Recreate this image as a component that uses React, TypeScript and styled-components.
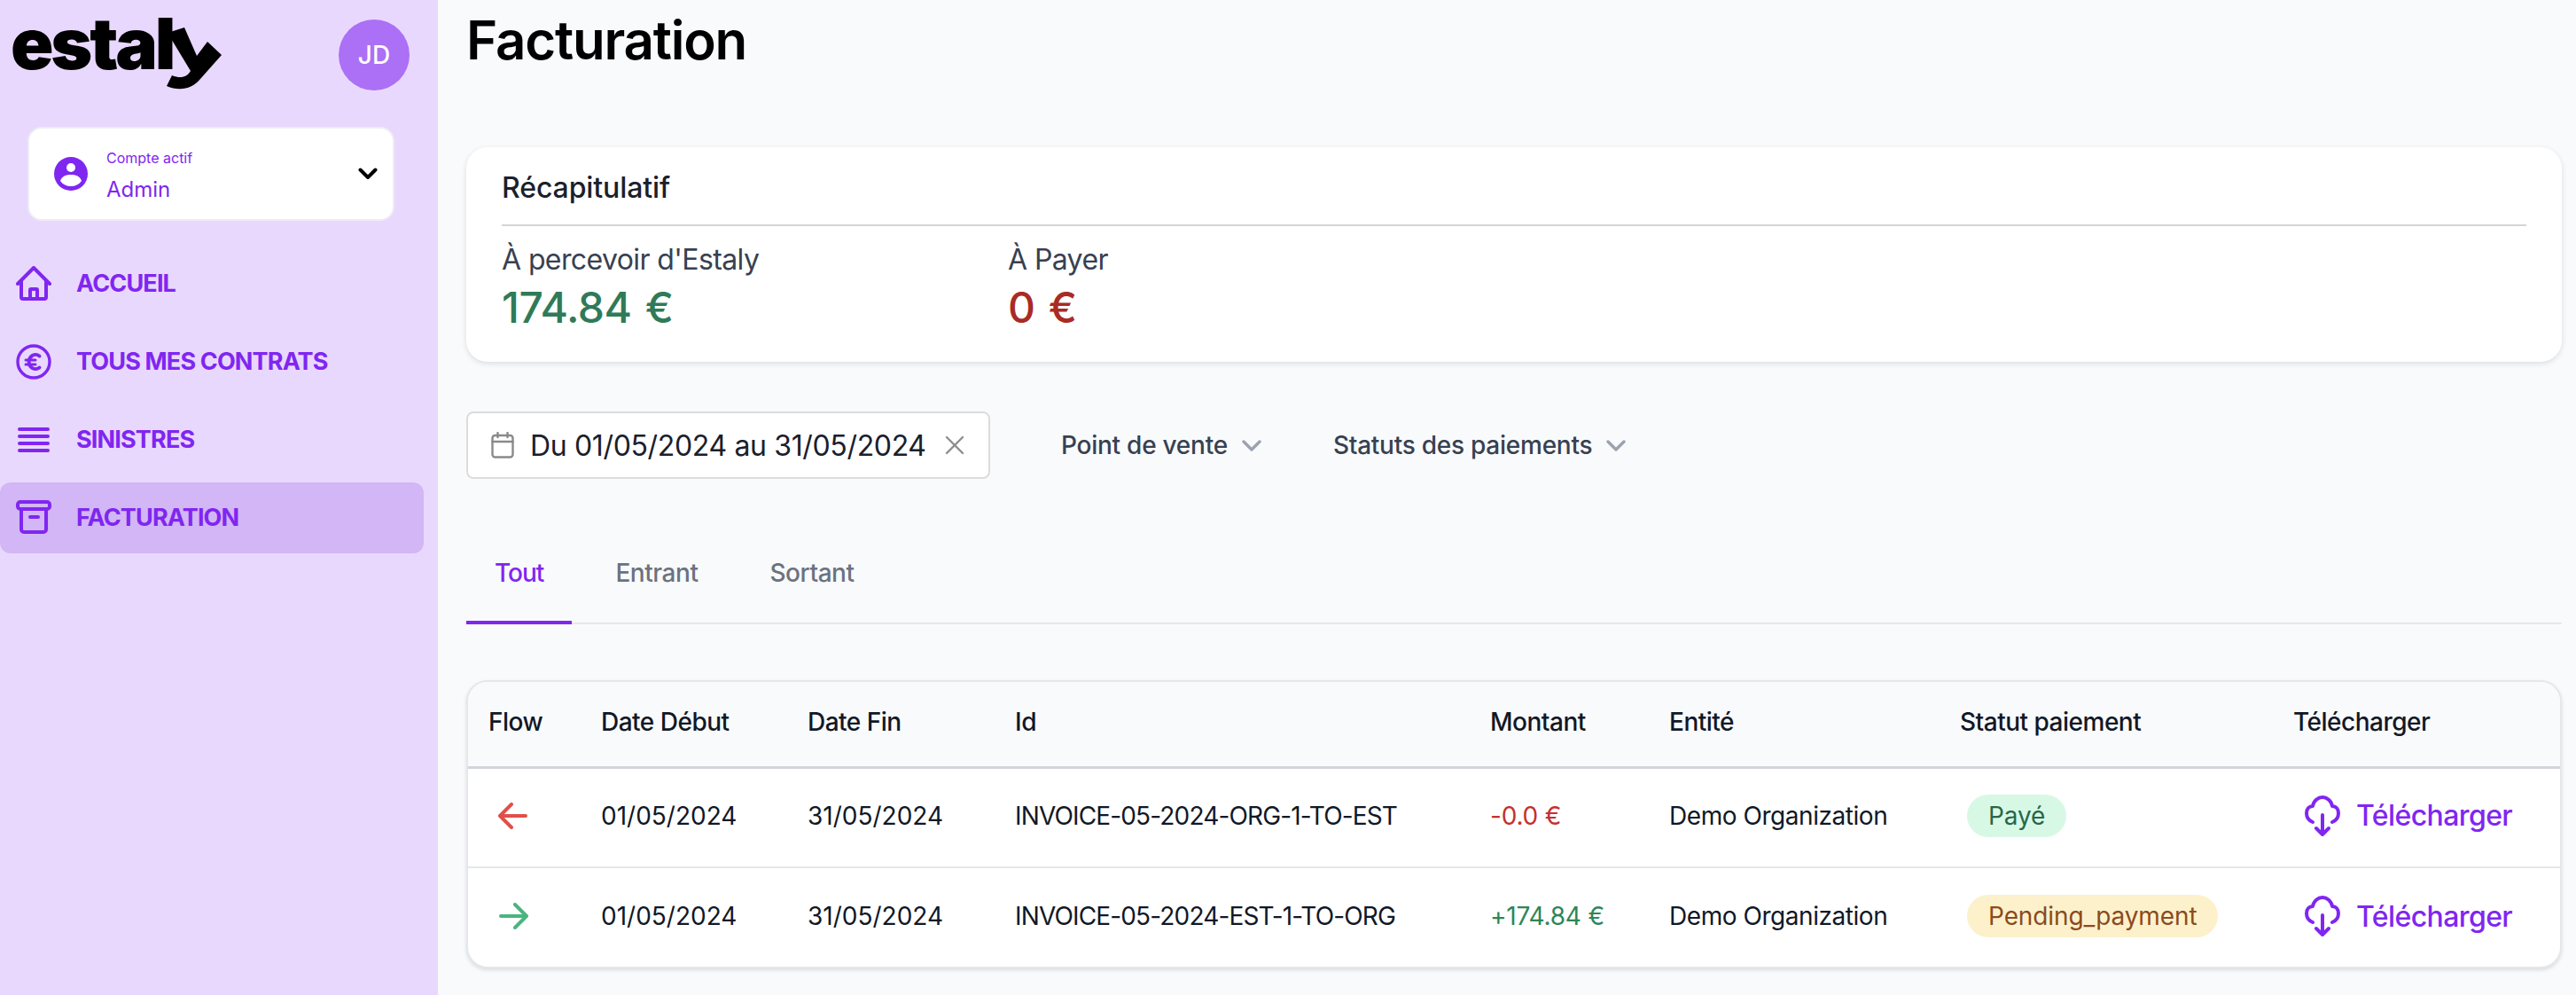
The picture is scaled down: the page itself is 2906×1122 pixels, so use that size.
import React from "react";
import styled, { createGlobalStyle } from "styled-components";

const purple = "#8026f1";

const GlobalStyle = createGlobalStyle`
  html, body {
    margin: 0;
    padding: 0;
    height: 100%;
    overflow: hidden;
    background: #f9fafb;
    font-family: "Inter", "Liberation Sans", sans-serif;
  }
  * {
    box-sizing: border-box;
  }
`;

const HomeIcon = () => (
  <svg width="40" height="40" viewBox="0 0 40 40" fill="none" stroke={purple} strokeWidth="4" strokeLinecap="round" strokeLinejoin="round">
    <path d="M2 20 L20 2 L38 20" />
    <path d="M6 17 V35 a2 2 0 0 0 2 2 H32 a2 2 0 0 0 2 -2 V17" />
    <path d="M16 37 V27 a1 1 0 0 1 1 -1 H23 a1 1 0 0 1 1 1 V37" />
  </svg>
);

const EuroIcon = () => (
  <svg width="40" height="40" viewBox="0 0 40 40" fill="none" stroke={purple} strokeLinecap="round">
    <circle cx="20" cy="20" r="18" strokeWidth="3.4" />
    <path d="M26.5 13.5 a7.5 8 0 1 0 0 13" strokeWidth="4" />
    <path d="M11 18 H22 M11 23 H22" strokeWidth="3" />
  </svg>
);

const LinesIcon = () => (
  <svg width="40" height="40" viewBox="0 0 40 40" fill="none" stroke={purple} strokeWidth="4" strokeLinecap="round">
    <path d="M4 5 H36 M4 13 H36 M4 21 H36 M4 29 H36" transform="translate(0 3)" />
  </svg>
);

const ArchiveIcon = () => (
  <svg width="40" height="40" viewBox="0 0 40 40" fill="none" stroke={purple} strokeWidth="4" strokeLinecap="round" strokeLinejoin="round">
    <rect x="2" y="2" width="36" height="8" rx="3" />
    <path d="M6 10 V33 a3 3 0 0 0 3 3 H31 a3 3 0 0 0 3 -3 V10" />
    <path d="M16 19 H25" />
  </svg>
);

const UserCircleIcon = () => (
  <svg width="38" height="38" viewBox="0 0 38 38">
    <circle cx="19" cy="19" r="19" fill={purple} />
    <circle cx="19" cy="12" r="5" fill="#fff" />
    <path d="M7 27 C9 21 14 20 19 20 C24 20 29 21 31 27 C28 31 24 33 19 33 C14 33 10 31 7 27 Z" fill="#fff" />
  </svg>
);

const CalendarIcon = () => (
  <svg width="26" height="30" viewBox="0 0 26 30" fill="none" stroke="#8a8a8a" strokeWidth="2.4" strokeLinecap="round">
    <rect x="1.5" y="4" width="23" height="24.5" rx="3" />
    <path d="M1.5 11 H24.5 M7.5 1 V6 M18.5 1 V6" />
  </svg>
);

const CloseIcon = () => (
  <svg width="22" height="22" viewBox="0 0 22 22" fill="none" stroke="#8f8f8f" strokeWidth="2.4" strokeLinecap="round">
    <path d="M2 2 L20 20 M20 2 L2 20" />
  </svg>
);

const SmallChevron = () => (
  <svg width="22" height="13" viewBox="0 0 22 13" fill="none" stroke="#9ca3af" strokeWidth="3.4" strokeLinecap="round" strokeLinejoin="round">
    <path d="M2 2 L11 11 L20 2" />
  </svg>
);

const BlackChevron = () => (
  <svg width="22" height="14" viewBox="0 0 22 14" fill="none" stroke="#000" strokeWidth="4" strokeLinecap="round" strokeLinejoin="round">
    <path d="M2.5 2.5 L11 11 L19.5 2.5" />
  </svg>
);

const ArrowIcon = ({ color, flip }: { color: string; flip?: boolean }) => (
  <svg width="34" height="30" viewBox="0 0 34 30" fill="none" stroke={color} strokeWidth="4" strokeLinecap="round" strokeLinejoin="round" style={flip ? { transform: "scaleX(-1)" } : undefined}>
    <path d="M2 15 H31 M15 2 L2 15 L15 28" />
  </svg>
);

const CloudDownloadIcon = () => (
  <svg width="40" height="46" viewBox="0 0 40 46" fill="none" stroke={purple} strokeWidth="4" strokeLinecap="round" strokeLinejoin="round">
    <path d="M9 30 C4 28 2 24 2 20 C2 15 5 12 9 12 C10 6 15 2 20 2 C25 2 30 6 31 12 C35 12 38 15 38 20 C38 24 36 28 31 30" />
    <path d="M20 22 V44 M13 37 L20 44 L27 37" />
  </svg>
);

const navItems = [
  { label: "ACCUEIL", icon: <HomeIcon /> },
  { label: "TOUS MES CONTRATS", icon: <EuroIcon /> },
  { label: "SINISTRES", icon: <LinesIcon /> },
  { label: "FACTURATION", icon: <ArchiveIcon />, active: true },
];

const invoices = [
  {
    out: true,
    id: "INVOICE-05-2024-ORG-1-TO-EST",
    amount: "-0.0 €",
    status: "Payé",
    paid: true,
  },
  {
    out: false,
    id: "INVOICE-05-2024-EST-1-TO-ORG",
    amount: "+174.84 €",
    status: "Pending_payment",
    paid: false,
  },
];

const columns = [127, 233, 234, 536, 202, 328, 376, 328];
const headers = ["Flow", "Date Début", "Date Fin", "Id", "Montant", "Entité", "Statut paiement", "Télécharger"];

const App = () => {
  return (
    <Page>
      <GlobalStyle />
      <Sidebar>
        <SidebarHead>
          <Logo aria-label="estaly">
            <LogoText>estal</LogoText>
            <LogoTail width="62" height="74" viewBox="0 0 62 74">
              <path d="M1 10 L20 4 L34 36 L46 20 L62 35 L38 62 C28 74 14 76 0 70 L6 58 C16 62 23 60 27 53 L1 10 Z" fill="#000" />
            </LogoTail>
          </Logo>
          <Avatar>JD</Avatar>
        </SidebarHead>
        <AccountCard>
          <UserCircleIcon />
          <AccountText>
            <AccountLabel>Compte actif</AccountLabel>
            <AccountName>Admin</AccountName>
          </AccountText>
          <BlackChevron />
        </AccountCard>
        <Nav>
          {navItems.map((item) => (
            <NavItem key={item.label} $active={item.active}>
              {item.icon}
              <span>{item.label}</span>
            </NavItem>
          ))}
        </Nav>
      </Sidebar>

      <Main>
        <Title>Facturation</Title>

        <SummaryCard>
          <SummaryTitle>Récapitulatif</SummaryTitle>
          <SummaryRow>
            <SummaryItem>
              <SummaryLabel>À percevoir d'Estaly</SummaryLabel>
              <SummaryValue $color="#2f7a58">174.84 €</SummaryValue>
            </SummaryItem>
            <SummaryItem>
              <SummaryLabel>À Payer</SummaryLabel>
              <SummaryValue $color="#a92b24">0 €</SummaryValue>
            </SummaryItem>
          </SummaryRow>
        </SummaryCard>

        <Filters>
          <DateField>
            <CalendarIcon />
            <DateText>Du 01/05/2024 au 31/05/2024</DateText>
            <CloseIcon />
          </DateField>
          <FilterButton $left={80}>
            Point de vente <SmallChevron />
          </FilterButton>
          <FilterButton $left={81}>
            Statuts des paiements <SmallChevron />
          </FilterButton>
        </Filters>

        <Tabs>
          <Tab $active>Tout</Tab>
          <Tab>Entrant</Tab>
          <Tab>Sortant</Tab>
        </Tabs>

        <TableCard>
          <Table>
            <colgroup>
              {columns.map((width, index) => (
                <col key={index} style={{ width }} />
              ))}
            </colgroup>
            <thead>
              <tr>
                {headers.map((header) => (
                  <Th key={header}>{header}</Th>
                ))}
              </tr>
            </thead>
            <tbody>
              {invoices.map((invoice, index) => (
                <Row key={invoice.id} $last={index === invoices.length - 1}>
                  <Td>
                    <ArrowCell>
                      {invoice.out ? <ArrowIcon color="#e0504a" /> : <ArrowIcon color="#4bb57f" flip />}
                    </ArrowCell>
                  </Td>
                  <Td>01/05/2024</Td>
                  <Td>31/05/2024</Td>
                  <Td>
                    <InvoiceId>{invoice.id}</InvoiceId>
                  </Td>
                  <Td>
                    <Amount $out={invoice.out}>{invoice.amount}</Amount>
                  </Td>
                  <Td>
                    <Entity>Demo Organization</Entity>
                  </Td>
                  <Td>
                    <Badge $paid={invoice.paid}>{invoice.status}</Badge>
                  </Td>
                  <Td>
                    <DownloadLink>
                      <CloudDownloadIcon />
                      Télécharger
                    </DownloadLink>
                  </Td>
                </Row>
              ))}
            </tbody>
          </Table>
        </TableCard>
      </Main>
    </Page>
  );
};

const Page = styled.div`
  display: flex;
  width: 100%;
  height: 100vh;
  overflow: hidden;
`;

const Sidebar = styled.aside`
  width: 494px;
  flex-shrink: 0;
  background: #e9d8fd;
  padding: 22px 16px 0 0;
`;

const SidebarHead = styled.div`
  display: flex;
  justify-content: space-between;
  align-items: flex-start;
  padding: 0 16px 0 12px;
  height: 80px;
`;

const Logo = styled.div`
  display: flex;
  align-items: flex-start;
  height: 80px;
  margin-top: -4px;
`;

const LogoText = styled.span`
  font-size: 80px;
  font-weight: 900;
  line-height: 62px;
  letter-spacing: -3.2px;
  color: #000;
`;

const LogoTail = styled.svg`
  margin: 9px 0 0 -7px;
`;

const Avatar = styled.div`
  width: 80px;
  height: 80px;
  border-radius: 50%;
  background: #ab70f5;
  color: #fff;
  font-size: 28px;
  font-weight: 500;
  display: flex;
  align-items: center;
  justify-content: center;
`;

const AccountCard = styled.div`
  margin: 41px 33px 0 31px;
  height: 106px;
  background: #fff;
  border: 2px solid #efecf3;
  border-radius: 16px;
  padding: 0 17px 0 28px;
  display: flex;
  align-items: center;
`;

const AccountText = styled.div`
  flex: 1;
  margin-left: 21px;
  color: ${purple};
`;

const AccountLabel = styled.div`
  font-size: 16px;
  line-height: 24px;
  margin-bottom: 9px;
  padding-top: 2px;
`;

const AccountName = styled.div`
  font-size: 24px;
  line-height: 30px;
`;

const Nav = styled.nav`
  margin-top: 31px;
  display: flex;
  flex-direction: column;
  gap: 8px;
`;

const NavItem = styled.a<{ $active?: boolean }>`
  display: flex;
  align-items: center;
  gap: 28px;
  height: 80px;
  padding-left: 18px;
  border-radius: 12px;
  background: ${({ $active }) => ($active ? "#d2b6f5" : "transparent")};
  color: ${purple};
  font-size: 27px;
  font-weight: 700;
  letter-spacing: -0.85px;

  span {
    margin-top: -2px;
  }
`;

const Main = styled.main`
  flex: 1;
  min-width: 0;
  padding: 0 16px 0 32px;
`;

const Title = styled.h1`
  margin: 0 0 76px;
  font-size: 60px;
  line-height: 90px;
  font-weight: 600;
  letter-spacing: -1.2px;
  color: #000;
`;

const SummaryCard = styled.section`
  height: 242px;
  background: #fff;
  border-radius: 24px;
  box-shadow: 0 2px 6px rgba(0, 0, 0, 0.12);
  padding: 0 40px;
`;

const SummaryTitle = styled.h2`
  margin: 0;
  height: 89px;
  border-bottom: 2px solid #d1d5db;
  font-size: 32px;
  font-weight: 500;
  line-height: 92px;
  letter-spacing: -0.1px;
  color: #1a202c;
`;

const SummaryRow = styled.div`
  display: flex;
  padding-top: 16px;
`;

const SummaryItem = styled.div`
  width: 571px;
`;

const SummaryLabel = styled.div`
  font-size: 32px;
  line-height: 44px;
  letter-spacing: -0.6px;
  color: #374151;
`;

const SummaryValue = styled.div<{ $color: string }>`
  font-size: 48px;
  line-height: 64px;
  font-weight: 500;
  letter-spacing: -0.5px;
  word-spacing: 3px;
  color: ${({ $color }) => $color};
`;

const Filters = styled.div`
  display: flex;
  align-items: center;
  margin-top: 56px;
`;

const DateField = styled.div`
  width: 591px;
  height: 76px;
  background: #fff;
  border: 2px solid #dcdcdc;
  border-radius: 8px;
  padding: 0 27px 0 26px;
  display: flex;
  align-items: center;
  flex-shrink: 0;
`;

const DateText = styled.span`
  flex: 1;
  margin-left: 18px;
  font-size: 32px;
  letter-spacing: -0.35px;
  white-space: nowrap;
  color: #1a202c;
`;

const FilterButton = styled.div<{ $left: number }>`
  padding-left: ${({ $left }) => $left}px;
  display: flex;
  align-items: center;
  gap: 16px;
  font-size: 28px;
  font-weight: 500;
  letter-spacing: -0.25px;
  white-space: nowrap;
  color: #374151;
`;

const Tabs = styled.div`
  display: flex;
  gap: 17px;
  margin-top: 44px;
  height: 120px;
  border-bottom: 2px solid #e5e7eb;
`;

const Tab = styled.div<{ $active?: boolean }>`
  height: 120px;
  padding: 9px 32px 0;
  line-height: 106px;
  font-size: 28px;
  font-weight: 500;
  letter-spacing: ${({ $active }) => ($active ? "-1px" : "-0.45px")};
  border-bottom: 4px solid ${({ $active }) => ($active ? purple : "transparent")};
  color: ${({ $active }) => ($active ? purple : "#6b7280")};
`;

const TableCard = styled.div`
  margin-top: 63px;
  height: 325px;
  border: 2px solid #e5e7eb;
  border-radius: 24px;
  overflow: hidden;
  background: #fff;
  box-shadow: 0 2px 4px rgba(0, 0, 0, 0.12);
`;

const Table = styled.table`
  width: 100%;
  table-layout: fixed;
  border-collapse: collapse;
`;

const Th = styled.th`
  height: 96px;
  padding: 0 0 4px 23px;
  background: #f9fafb;
  border-bottom: 3px solid #d1d5db;
  text-align: left;
  font-size: 28px;
  font-weight: 500;
  letter-spacing: -0.5px;
  color: #111827;
`;

const Row = styled.tr<{ $last: boolean }>`
  height: 113px;
  border-bottom: ${({ $last }) => ($last ? "none" : "2px solid #e5e7eb")};
`;

const Td = styled.td`
  padding: 0 0 4px 23px;
  font-size: 28px;
  color: #111827;
  white-space: nowrap;
`;

const InvoiceId = styled.span`
  letter-spacing: -0.85px;
`;

const Entity = styled.span`
  letter-spacing: -0.45px;
`;

const ArrowCell = styled.div`
  display: flex;
  padding-left: 11px;
`;

const Amount = styled.span<{ $out: boolean }>`
  letter-spacing: -0.2px;
  color: ${({ $out }) => ($out ? "#c53030" : "#2f855a")};
`;

const Badge = styled.span<{ $paid: boolean }>`
  display: inline-block;
  height: 48px;
  margin-left: 8px;
  padding: 0 24px;
  border-radius: 24px;
  line-height: 48px;
  letter-spacing: -0.1px;
  background: ${({ $paid }) => ($paid ? "#d8f8e6" : "#fcf1cb")};
  color: ${({ $paid }) => ($paid ? "#276749" : "#8a4b1e")};
`;

const DownloadLink = styled.a`
  display: flex;
  align-items: center;
  gap: 18px;
  padding-left: 13px;
  font-size: 32px;
  font-weight: 500;
  letter-spacing: -0.6px;
  color: ${purple};
`;

export default App;
